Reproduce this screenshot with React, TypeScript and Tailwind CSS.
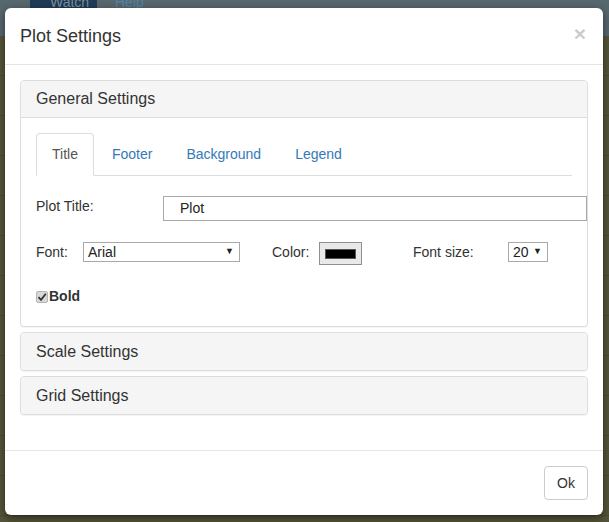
import React from 'react'

const font = { fontFamily: '"Liberation Sans", Arial, sans-serif' }

function Panel({ title, children }: { title: string; children?: React.ReactNode }) {
  return (
    <div className="border border-[#ddd] rounded-[4px] bg-white shadow-[0_1px_1px_rgba(0,0,0,0.05)]">
      <div className={`bg-[#f5f5f5] px-[15px] py-[10px] text-[16px] text-[#333] rounded-t-[3px] ${children ? 'leading-[16px] border-b border-[#ddd]' : 'leading-[17px] rounded-b-[3px]'}`}>
        {title}
      </div>
      {children}
    </div>
  )
}

function FakeSelect({ value, width }: { value: string; width: string }) {
  return (
    <div className={`${width} shrink-0 h-[20px] border border-[#a9a9a9] bg-white flex items-center justify-between pl-[4px] pr-[5px] text-[14px] text-[#222]`}>
      <span>{value}</span>
      <span className="text-[9px] text-[#222]">▼</span>
    </div>
  )
}

export default function App() {
  const tabs = ['Title', 'Footer', 'Background', 'Legend']
  return (
    <div className="relative w-[609px] h-[522px] overflow-hidden bg-[#55553b]" style={font}>
      {/* backdrop app */}
      <div className="h-[36px] bg-[#56676d] flex items-start pl-[30px]">
        <div className="h-[36px] w-[67px] bg-[#1d3b57] text-[#7f8d9b] text-[14px] pl-[20px] leading-[4px]">Watch</div>
        <div className="text-[#4f84a8] text-[14px] pl-[18px] leading-[4px]">Help</div>
      </div>
      <div className="flex flex-col">
        {Array.from({ length: 12 }).map((_, i) => (
          <div key={i} className="h-[40px] border-b border-[#4a4a33]" />
        ))}
      </div>

      {/* modal */}
      <div className="absolute left-[5px] top-[8px] w-[598px] bg-white rounded-[6px] shadow-[0_3px_9px_rgba(0,0,0,0.5)] text-[14px] text-[#333]">
        <div className="flex items-center justify-between px-[15px] py-[15px] border-b border-[#e5e5e5]">
          <h4 className="text-[18px] leading-[26px] text-[#333]">Plot Settings</h4>
          <span className="text-[21px] font-bold leading-none text-[#000] opacity-20 mr-[2px] -mt-[6px]">×</span>
        </div>

        <div className="px-[15px] pt-[15px] pb-[15px]">
          <div className="flex flex-col gap-[5px] mb-[20px]">
            <Panel title="General Settings">
              <div className="p-[15px]">
                <div className="flex border-b border-[#ddd]">
                  {tabs.map((t, i) =>
                    i === 0 ? (
                      <div key={t} className="mr-[2px] -mb-px px-[15px] py-[10px] leading-[20px] border border-[#ddd] border-b-white rounded-t-[4px] bg-white text-[#555]">
                        {t}
                      </div>
                    ) : (
                      <div key={t} className="mr-[2px] px-[15px] py-[10px] leading-[20px] border border-transparent text-[#337ab7]">
                        {t}
                      </div>
                    )
                  )}
                </div>

                <div className="flex items-start mt-[20px]">
                  <div className="w-[127px] shrink-0 pt-[2px] leading-[16px] text-[#333]">Plot Title:</div>
                  <div className="w-[424px] shrink-0 h-[25px] border border-[#a9a9a9] flex items-center pl-[16px] text-[14px] text-[#222]">
                    Plot
                  </div>
                </div>

                <div className="flex items-start mt-[21px]">
                  <div className="w-[47px] shrink-0 leading-[20px]">Font:</div>
                  <FakeSelect value="Arial" width="w-[157px]" />
                  <div className="w-[47px] shrink-0 ml-[32px] leading-[20px]">Color:</div>
                  <div className="w-[43px] shrink-0 h-[23px] border border-[#8f8f8f] bg-[#e9e9e9] flex items-center justify-center">
                    <div className="w-[31px] h-[10px] bg-black border border-[#555]" />
                  </div>
                  <div className="w-[95px] shrink-0 ml-[51px] leading-[20px]">Font size:</div>
                  <FakeSelect value="20" width="w-[40px]" />
                </div>

                <div className="flex items-center mt-[21px] mb-[4px]">
                  <span className="w-[12px] h-[12px] rounded-[2px] bg-[#d8d8d8] border border-[#b5b5b5] flex items-center justify-center">
                    <svg width="10" height="10" viewBox="0 0 10 10">
                      <path d="M1.5 5.2 L4 7.8 L8.8 1.8" stroke="#333" strokeWidth="1.8" fill="none" />
                    </svg>
                  </span>
                  <span className="font-bold ml-[1px] text-[#333]">Bold</span>
                </div>
              </div>
            </Panel>
            <Panel title="Scale Settings" />
            <Panel title="Grid Settings" />
          </div>
        </div>

        <div className="border-t border-[#e5e5e5] p-[15px] flex justify-end">
          <button className="h-[34px] px-[12px] border border-[#ccc] rounded-[4px] bg-white text-[#333] text-[14px] leading-[20px]">
            Ok
          </button>
        </div>
      </div>
    </div>
  )
}
